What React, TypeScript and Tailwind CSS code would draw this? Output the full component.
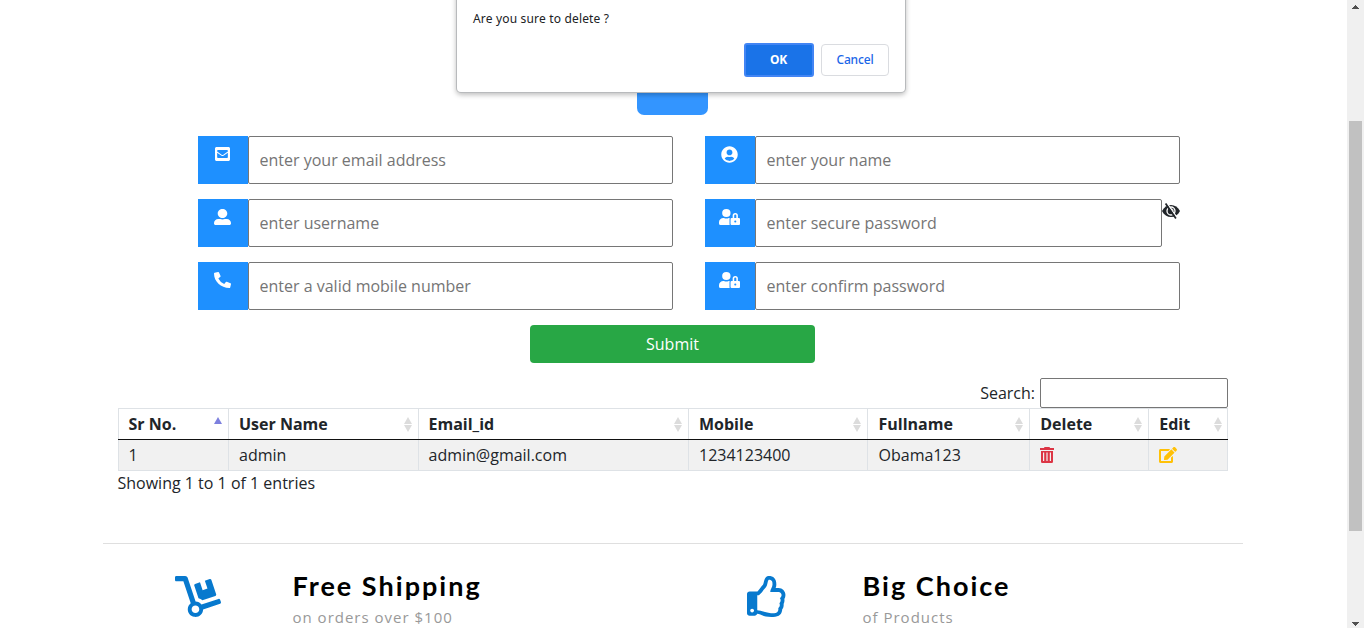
import type { ReactNode } from "react";
import {
  FaDolly,
  FaEdit,
  FaEnvelopeSquare,
  FaPhoneAlt,
  FaRegThumbsUp,
  FaUserAlt,
  FaUserCircle,
  FaUserLock,
} from "react-icons/fa";

function Field({ icon, placeholder, after }: { icon: ReactNode; placeholder: string; after?: ReactNode }) {
  return (
    <div className="flex h-12 w-[475px]">
      <div className="flex w-[50px] shrink-0 justify-center bg-[#1e90ff] pt-[10px] pr-px text-white">{icon}</div>
      <input
        className="h-12 min-w-0 flex-1 rounded-[2px] border border-[#767676] bg-white px-[10.5px] text-[16px] placeholder:text-[#757575]"
        placeholder={placeholder}
      />
      {after}
    </div>
  );
}

function EyeBlocked() {
  return (
    <svg className="mt-1 h-4 w-[18px] shrink-0" viewBox="0 0 18 16" fill="none">
      <path d="M0 8 C2 4 5.3 2 9 2 S16 4 18 8 C16 12 12.7 14 9 14 S2 12 0 8Z" fill="#212529" />
      <circle cx="9" cy="8" r="4" stroke="#ffffff" strokeWidth="1.3" />
      <path d="M9.2 5.8a2 2 0 0 1 2 2" stroke="#ffffff" strokeWidth="1" />
      <path d="M4.9 0.2 L15.3 14.8" stroke="#ffffff" strokeWidth="1.4" />
      <path d="M3.6 0.6 L13.9 15.4" stroke="#212529" strokeWidth="1.8" />
    </svg>
  );
}

function Trash() {
  return (
    <svg className="h-4 w-[14px]" viewBox="0 0 14 16" fill="#dc3545">
      <path d="M4.5 0H9.5L10 1H14V3H0V1H4Z" />
      <path
        fillRule="evenodd"
        d="M1 4H13V14.8Q13 16 11.8 16H2.2Q1 16 1 14.8ZM3 5.5V14H4.2V5.5ZM6.4 5.5V14H7.6V5.5ZM9.8 5.5V14H11V5.5Z"
      />
    </svg>
  );
}

function SortIcon({ active }: { active?: boolean }) {
  return active ? (
    <svg className="mb-[7px] h-[7px] w-2" viewBox="0 0 8 7">
      <path d="M0 7 L4 0 L8 7Z" fill="#7d80de" />
    </svg>
  ) : (
    <svg className="h-[15px] w-2" viewBox="0 0 8 15">
      <path d="M0 7 L4 0 L8 7Z M0 8 L4 15 L8 8Z" fill="#dcdcdc" />
    </svg>
  );
}

const columns = ["Sr No.", "User Name", "Email_id", "Mobile", "Fullname", "Delete", "Edit"];

const paddings = ["pl-[9.5px]", "pl-[10px]", "pl-[9.5px]", "pl-[10px]", "pl-[10.5px]", "pl-[10.25px]", "pl-[10.25px]"];

const cells: ReactNode[] = [
  "1",
  "admin",
  "admin@gmail.com",
  "1234123400",
  "Obama123",
  <Trash key="delete" />,
  <FaEdit key="edit" className="-ml-[0.25px] h-4 w-[18px] text-[#ffc107]" />,
];

function Feature({ icon, title, text }: { icon: ReactNode; title: string; text: string }) {
  return (
    <div className="flex w-[570px]">
      <div className="flex w-[189.5px] justify-center pt-8">{icon}</div>
      <div className="pt-[24px]">
        <h3 className="font-['Lato',sans-serif] text-[27px] leading-[36px] font-bold tracking-[2.02px] text-black">{title}</h3>
        <p className="pt-[2px] text-[15px] leading-[22px] tracking-[1px] text-[#999999]">{text}</p>
      </div>
    </div>
  );
}

export default function App() {
  return (
    <div className="relative flex h-[628px] w-[1364px] overflow-hidden bg-white font-['Open_Sans',sans-serif] text-[16px] leading-6 text-[#212529]">
      <main className="flex w-[1347px] shrink-0 flex-col">
        <div className="ml-[637.4px] h-[115px] w-[70.2px] shrink-0 rounded-b-[7px] bg-[#3395ff]" />

        <form className="flex shrink-0 flex-col">
          <div className="mt-[21px] ml-[198px] grid w-[982px] grid-cols-[475px_475px] gap-x-8 gap-y-[15px]">
            <Field icon={<FaEnvelopeSquare className="h-4 w-[15px]" preserveAspectRatio="none" />} placeholder="enter your email address" />
            <Field icon={<FaUserCircle className="-mt-[0.5px] size-[17px]" />} placeholder="enter your name" />
            <Field icon={<FaUserAlt className="h-4 w-[17px]" preserveAspectRatio="none" />} placeholder="enter username" />
            <Field icon={<FaUserLock className="h-4 w-[21px]" preserveAspectRatio="none" />} placeholder="enter secure password" after={<EyeBlocked />} />
            <Field icon={<FaPhoneAlt className="h-4 w-[17px]" preserveAspectRatio="none" />} placeholder="enter a valid mobile number" />
            <Field icon={<FaUserLock className="h-4 w-[21px]" preserveAspectRatio="none" />} placeholder="enter confirm password" />
          </div>
          <button type="button" className="mt-[15px] ml-[530px] h-[38px] w-[285px] rounded-[4px] bg-[#28a745] text-white">
            Submit
          </button>
        </form>

        <section className="ml-[118px] w-[1110px] shrink-0 pt-[15px]">
          <label className="flex h-[30px] items-center justify-end gap-[5px]">
            Search:
            <input className="h-[30px] w-[188px] rounded-[2px] border border-[#767676] bg-white px-1" />
          </label>
          <div className="grid h-8 grid-cols-[110px_190px_270px_179px_162px_119px_80px] border-t border-b border-t-[#dee2e6] border-b-[#111111] font-bold">
            {columns.map((name, i) => (
              <div key={name} className={`flex items-center justify-between border-l border-[#dee2e6] pr-[5.6px] last:border-r last:pr-[5px] ${paddings[i]}`}>
                {name}
                <SortIcon active={i === 0} />
              </div>
            ))}
          </div>
          <div className="grid h-[31px] grid-cols-[110px_190px_270px_179px_162px_119px_80px] border-b border-[#dee2e6] bg-[#f1f1f1]">
            {cells.map((cell, i) => (
              <div key={i} className={`flex items-center border-l border-[#dee2e6] last:border-r ${paddings[i]}`}>
                {cell}
              </div>
            ))}
          </div>
          <div className="-ml-[0.5px]">Showing 1 to 1 of 1 entries</div>
        </section>

        <section className="mt-12 ml-[103px] flex w-[1140px] shrink-0 border-t border-[#dfdfdf]">
          <Feature icon={<FaDolly className="h-[41px] w-[46px] text-[#0779ce]" />} title="Free Shipping" text="on orders over $100" />
          <Feature icon={<FaRegThumbsUp className="mr-px size-[41px] text-[#0779ce]" />} title="Big Choice" text="of Products" />
        </section>
      </main>

      <aside className="flex w-[17px] shrink-0 flex-col items-center bg-[#f0f0f0]">
        <svg className="mt-[5px] h-1 w-[7px]" viewBox="0 0 7 4" shapeRendering="crispEdges">
          <path d="M0 4V3H1V2H2V1H3V0H4V1H5V2H6V3H7V4Z" fill="#505050" />
        </svg>
        <div className="mt-28 h-[410px] w-[13px] bg-[#c1c1c1]" />
        <svg className="mt-[91px] h-1 w-[7px]" viewBox="0 0 7 4" shapeRendering="crispEdges">
          <path d="M0 0V1H1V2H2V3H3V4H4V3H5V2H6V1H7V0Z" fill="#505050" />
        </svg>
      </aside>

      <div className="absolute top-[-10px] left-[457px] h-[102px] w-[448px] rounded-[4px] bg-white pt-5 pr-4 pl-4 font-['Noto_Sans',sans-serif] text-[12px] leading-[18px] text-[#202124] shadow-[0_0_0_1px_#b8babc,0_2px_5px_1px_rgba(0,0,0,0.25)]">
        <p className="tracking-[0.17px]">Are you sure to delete ?</p>
        <div className="mt-[15px] flex items-center justify-end gap-[7px]">
          <button className="h-[34px] w-[70px] rounded-[3px] border-2 border-[#4285f4] bg-[#1a73e8] pr-[1px] font-bold tracking-[-0.3px] text-white">
            OK
          </button>
          <button className="h-8 w-[68px] rounded-[4px] border border-[#dadce0] font-medium tracking-[-0.15px] text-[#1a66e8]">Cancel</button>
        </div>
      </div>
    </div>
  );
}
